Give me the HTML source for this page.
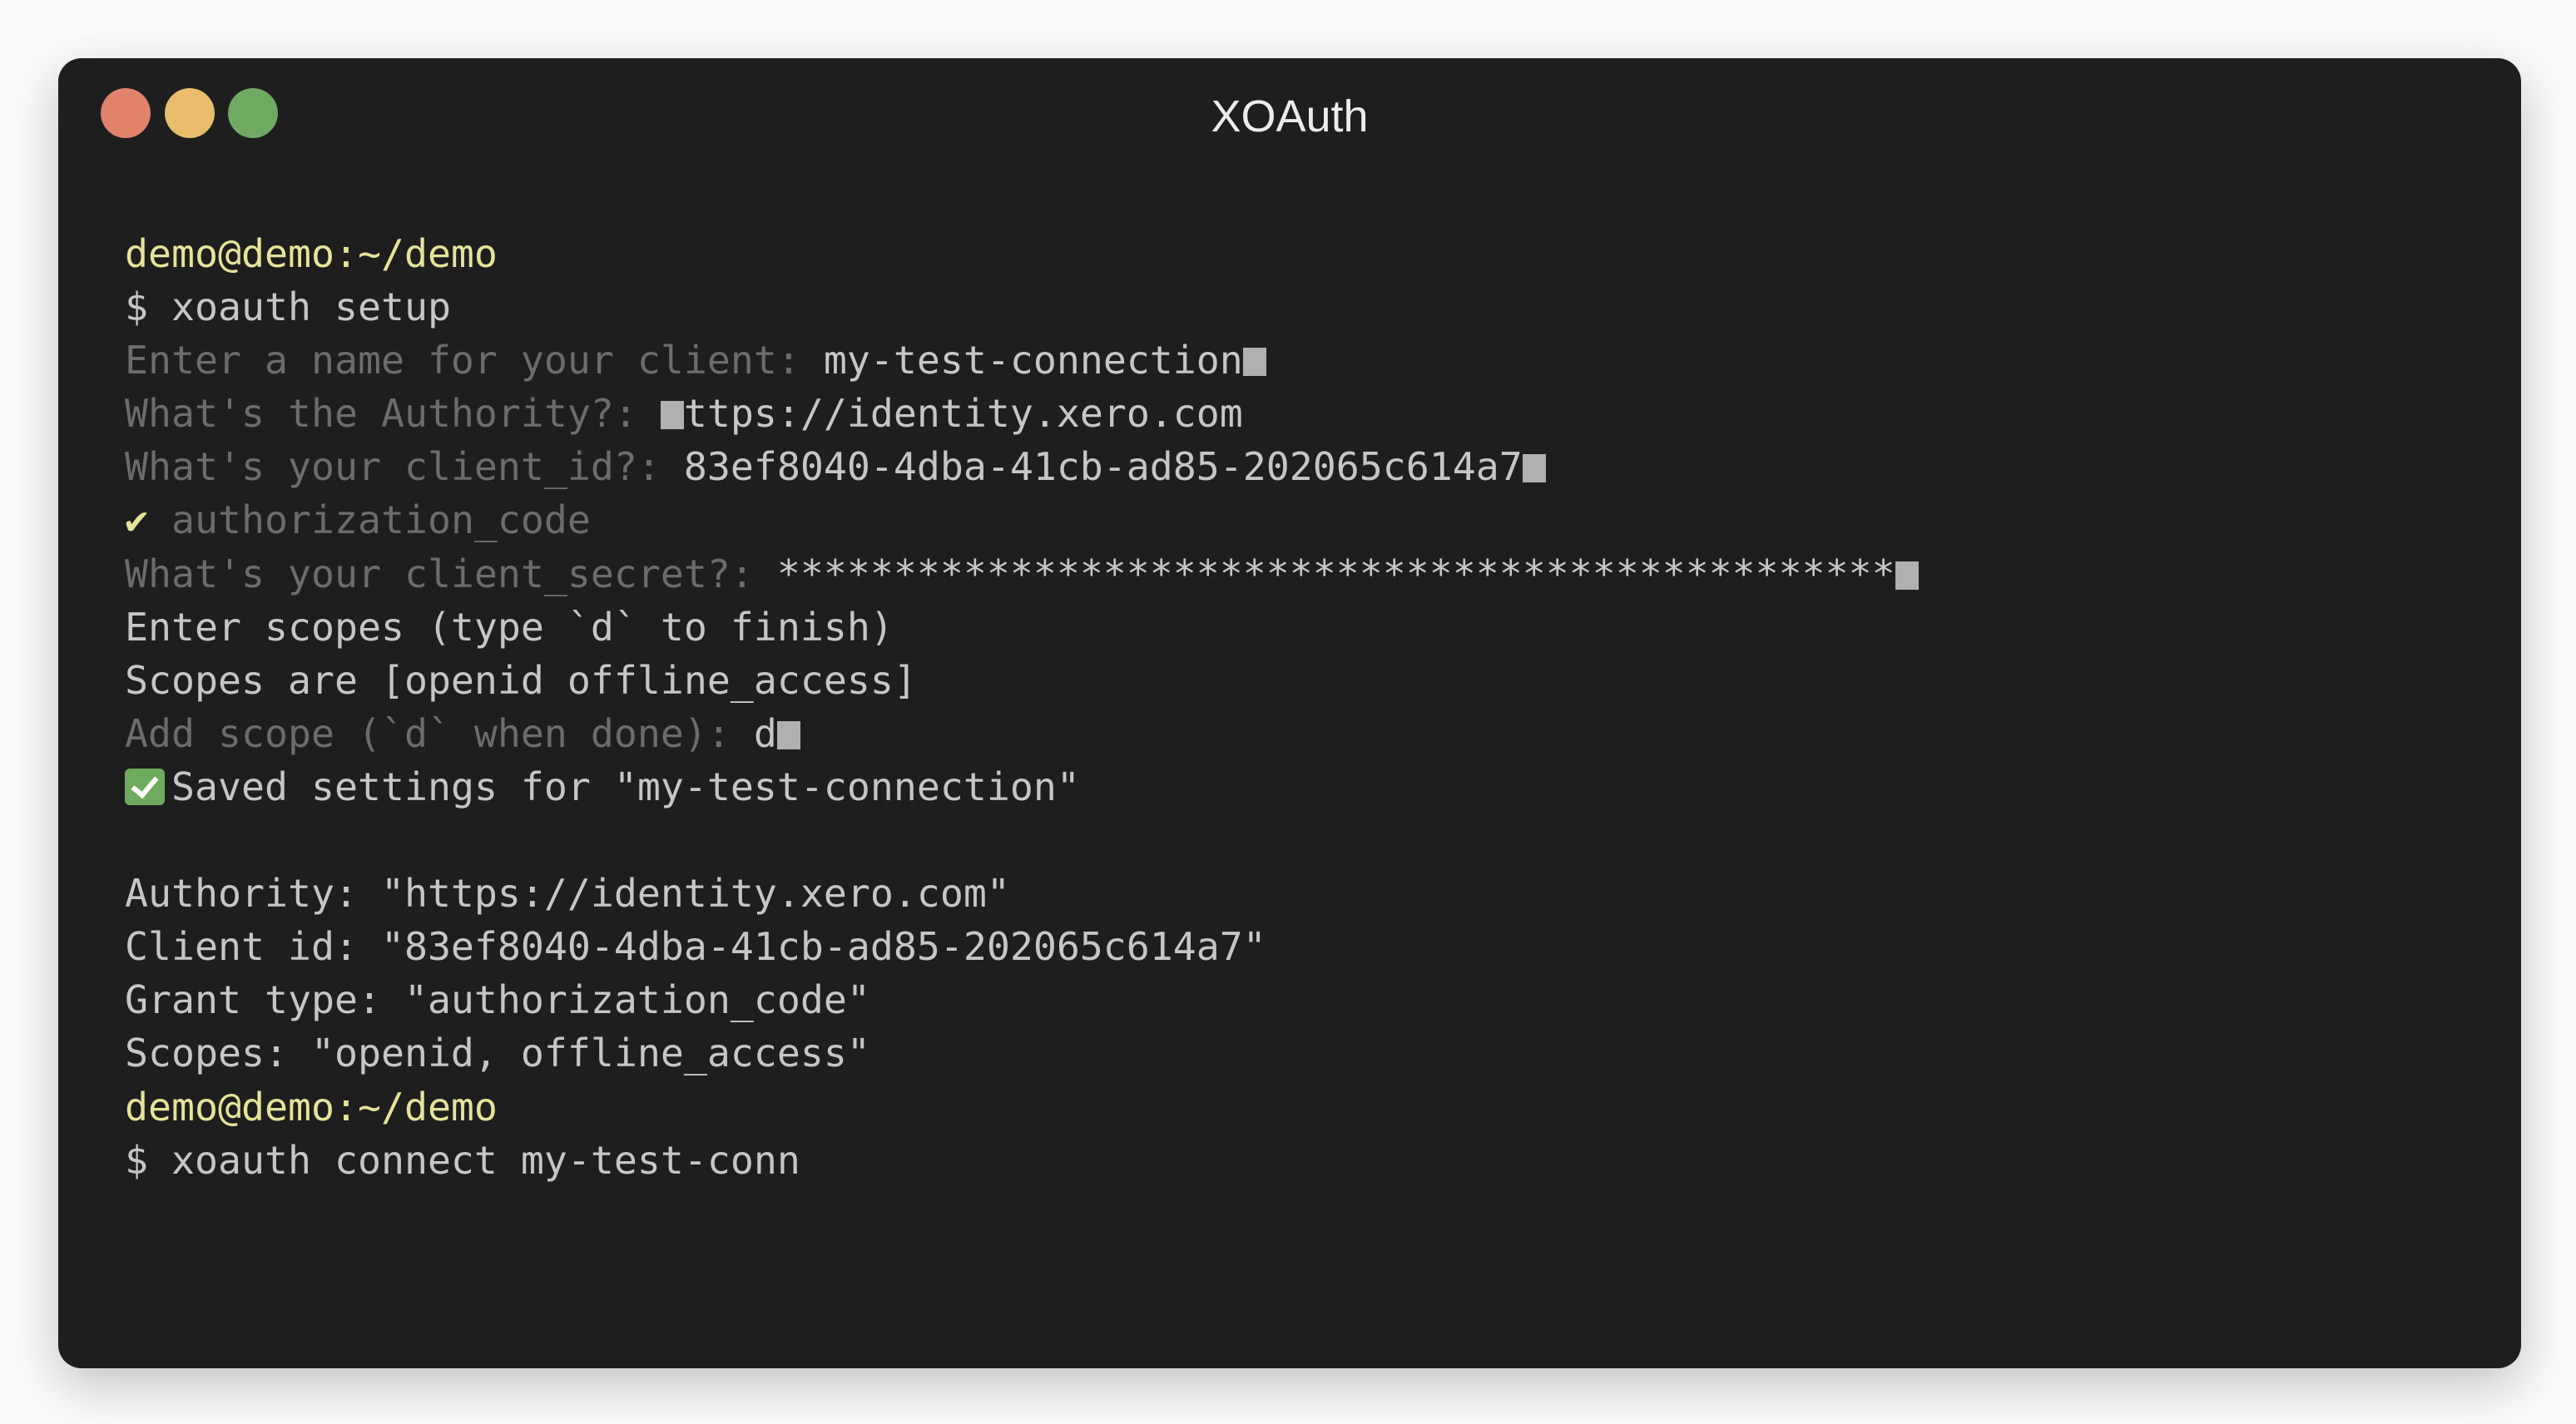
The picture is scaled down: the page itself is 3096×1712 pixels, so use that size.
<!DOCTYPE html>
<html><head><meta charset="utf-8"><style>
html,body{margin:0;padding:0;width:3096px;height:1712px;background:#fafafa;overflow:hidden}
.win{position:absolute;left:70px;top:70px;width:2960px;height:1575px;background:#1e1e1e;border-radius:28px;box-shadow:0 20px 60px rgba(0,0,0,0.22)}
.dot{position:absolute;top:36px;width:60px;height:60px;border-radius:50%}
.title{position:absolute;left:0;right:0;top:30px;text-align:center;color:#ececec;font:54px "Liberation Sans",sans-serif;line-height:80px}
.term{position:absolute;left:80px;top:203px;font:46.5px "DejaVu Sans Mono",monospace;line-height:64.1px;color:#c6c6c6;white-space:pre}
.y{color:#e6e39a}.g{color:#6c6c6c}
.cur{display:inline-block;width:28px;height:34px;background:#b0b0b0;vertical-align:-3px}
.em{display:inline-block;width:48px;height:44px;background:#6fab5f;border-radius:6px;vertical-align:-6px;margin-right:8px;position:relative}
.em:after{content:"";position:absolute;left:15px;top:4px;width:12px;height:24px;border:solid #fff;border-width:0 6px 6px 0;transform:rotate(40deg)}
</style></head><body>
<div class="win">
<div class="dot" style="left:51px;background:#e0836a"></div>
<div class="dot" style="left:128px;background:#e9bd6c"></div>
<div class="dot" style="left:204px;background:#6faa62"></div>
<div class="title">XOAuth</div>
<div class="term"><span class="y">demo@demo:~/demo</span>
$ xoauth setup
<span class="g">Enter a name for your client: </span>my-test-connection<span class="cur"></span>
<span class="g">What's the Authority?: </span><span class="cur"></span>ttps://identity.xero.com
<span class="g">What's your client_id?: </span>83ef8040-4dba-41cb-ad85-202065c614a7<span class="cur"></span>
<span class="y">✔</span> <span class="g">authorization_code</span>
<span class="g">What's your client_secret?: </span>************************************************<span class="cur"></span>
Enter scopes (type `d` to finish)
Scopes are [openid offline_access]
<span class="g">Add scope (`d` when done): </span>d<span class="cur"></span>
<span class="em"></span>Saved settings for "my-test-connection"

Authority: "https://identity.xero.com"
Client id: "83ef8040-4dba-41cb-ad85-202065c614a7"
Grant type: "authorization_code"
Scopes: "openid, offline_access"
<span class="y">demo@demo:~/demo</span>
$ xoauth connect my-test-conn</div>
</div>
</body></html>
